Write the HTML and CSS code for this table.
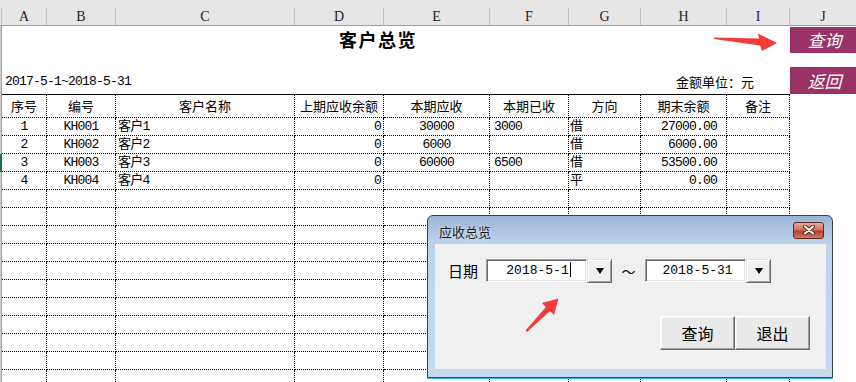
FILE: index.html
```html
<!DOCTYPE html>
<html lang="zh">
<head>
<meta charset="utf-8">
<title>客户总览</title>
<link rel="stylesheet" href="styles.css">
</head>
<body>
<div class="colhdr cols">
  <div class="ch corner"></div>
  <div class="ch">A</div><div class="ch">B</div><div class="ch">C</div><div class="ch">D</div><div class="ch">E</div>
  <div class="ch">F</div><div class="ch">G</div><div class="ch">H</div><div class="ch">I</div><div class="ch last">J</div>
</div>

<div class="top cols">
  <div class="rh span2"></div>
  <div class="title">客户总览</div>
  <div class="info"><span class="range">2017-5-1~2018-5-31</span><span class="unit">金额单位：元</span></div>
  <div class="side">
    <div class="macro b1">查询</div>
    <div class="macro b2">返回</div>
  </div>
</div>

<div class="row head cols">
  <div class="rh"></div>
  <div class="c th">序号</div><div class="c th">编号</div><div class="c th">客户名称</div><div class="c th">上期应收余额</div>
  <div class="c th">本期应收</div><div class="c th">本期已收</div><div class="c th">方向</div><div class="c th">期末余额</div><div class="c th">备注</div>
  <div class="j"></div>
</div>

<div class="row cols"><div class="rh"></div><div class="c ce">1</div><div class="c ce">KH001</div><div class="c le">客户1</div><div class="c ri">0</div><div class="c ce">30000</div><div class="c le f">3000</div><div class="c le g">借</div><div class="c rr">27000.00</div><div class="c"></div><div class="j"></div></div>
<div class="row cols"><div class="rh"></div><div class="c ce">2</div><div class="c ce">KH002</div><div class="c le">客户2</div><div class="c ri">0</div><div class="c ce">6000</div><div class="c le f"></div><div class="c le g">借</div><div class="c rr">6000.00</div><div class="c"></div><div class="j"></div></div>
<div class="row cols"><div class="rh sel"></div><div class="c ce">3</div><div class="c ce">KH003</div><div class="c le">客户3</div><div class="c ri">0</div><div class="c ce">60000</div><div class="c le f">6500</div><div class="c le g">借</div><div class="c rr">53500.00</div><div class="c"></div><div class="j"></div></div>
<div class="row cols"><div class="rh"></div><div class="c ce">4</div><div class="c ce">KH004</div><div class="c le">客户4</div><div class="c ri">0</div><div class="c ce"></div><div class="c le f"></div><div class="c le g">平</div><div class="c rr">0.00</div><div class="c"></div><div class="j"></div></div>
<div class="row cols"><div class="rh"></div><div class="c"></div><div class="c"></div><div class="c"></div><div class="c"></div><div class="c"></div><div class="c"></div><div class="c"></div><div class="c"></div><div class="c"></div><div class="j"></div></div>
<div class="row cols"><div class="rh"></div><div class="c"></div><div class="c"></div><div class="c"></div><div class="c"></div><div class="c"></div><div class="c"></div><div class="c"></div><div class="c"></div><div class="c"></div><div class="j"></div></div>
<div class="row cols"><div class="rh"></div><div class="c"></div><div class="c"></div><div class="c"></div><div class="c"></div><div class="c"></div><div class="c"></div><div class="c"></div><div class="c"></div><div class="c"></div><div class="j"></div></div>
<div class="row cols"><div class="rh"></div><div class="c"></div><div class="c"></div><div class="c"></div><div class="c"></div><div class="c"></div><div class="c"></div><div class="c"></div><div class="c"></div><div class="c"></div><div class="j"></div></div>
<div class="row cols"><div class="rh"></div><div class="c"></div><div class="c"></div><div class="c"></div><div class="c"></div><div class="c"></div><div class="c"></div><div class="c"></div><div class="c"></div><div class="c"></div><div class="j"></div></div>
<div class="row cols"><div class="rh"></div><div class="c"></div><div class="c"></div><div class="c"></div><div class="c"></div><div class="c"></div><div class="c"></div><div class="c"></div><div class="c"></div><div class="c"></div><div class="j"></div></div>
<div class="row cols"><div class="rh"></div><div class="c"></div><div class="c"></div><div class="c"></div><div class="c"></div><div class="c"></div><div class="c"></div><div class="c"></div><div class="c"></div><div class="c"></div><div class="j"></div></div>
<div class="row cols"><div class="rh"></div><div class="c"></div><div class="c"></div><div class="c"></div><div class="c"></div><div class="c"></div><div class="c"></div><div class="c"></div><div class="c"></div><div class="c"></div><div class="j"></div></div>
<div class="row cols"><div class="rh"></div><div class="c"></div><div class="c"></div><div class="c"></div><div class="c"></div><div class="c"></div><div class="c"></div><div class="c"></div><div class="c"></div><div class="c"></div><div class="j"></div></div>
<div class="row cols"><div class="rh"></div><div class="c"></div><div class="c"></div><div class="c"></div><div class="c"></div><div class="c"></div><div class="c"></div><div class="c"></div><div class="c"></div><div class="c"></div><div class="j"></div></div>
<div class="row cols"><div class="rh"></div><div class="c"></div><div class="c"></div><div class="c"></div><div class="c"></div><div class="c"></div><div class="c"></div><div class="c"></div><div class="c"></div><div class="c"></div><div class="j"></div></div>

<div class="dialog">
  <div class="dtitle">
    <span class="dname">应收总览</span>
    <div class="xbtn"><svg width="14" height="10" viewBox="0 0 14 10"><path d="M3 1.5 L11 8.5 M11 1.5 L3 8.5" stroke="#5a2a22" stroke-width="4" stroke-linecap="round"/><path d="M3 1.5 L11 8.5 M11 1.5 L3 8.5" stroke="#fff" stroke-width="2" stroke-linecap="round"/></svg></div>
  </div>
  <div class="client">
    <div class="daterow">
      <span class="lbl">日期</span>
      <div class="combo"><div class="inp">2018-5-1<span class="caret"></span></div><div class="dd"><svg width="8" height="6" viewBox="0 0 8 6"><polygon points="0,0 8,0 4,6" fill="#000"/></svg></div></div>
      <span class="tilde">～</span>
      <div class="combo"><div class="inp">2018-5-31</div><div class="dd"><svg width="8" height="6" viewBox="0 0 8 6"><polygon points="0,0 8,0 4,6" fill="#000"/></svg></div></div>
    </div>
    <div class="btnrow">
      <div class="dbtn">查询</div>
      <div class="dbtn">退出</div>
    </div>
  </div>
</div>

<svg class="marks" width="856" height="382" viewBox="0 0 856 382">
  <polygon points="714,37.5 759,38.5 758,33.5 777,43 762,51 760,45.5 714,39" fill="#f23b3b"/>
  <polygon points="525.5,330.5 546,307 542,303 558.5,298.5 554,315 550,311 527,332" fill="#f23b3b"/>
</svg>
</body>
</html>
```

FILE: styles.css
```css
* { box-sizing: border-box; margin: 0; padding: 0; }
html, body { width: 856px; height: 382px; overflow: hidden; background: #fff; }
body {
  position: relative;
  font-family: "Liberation Mono", "Noto Sans CJK SC", monospace;
  font-size: 13px;
  letter-spacing: -0.8px;
  color: #000;
}

.cols {
  display: grid;
  grid-template-columns: 2px 45px 69px 179px 89px 106px 79px 72px 86px 63px 66px;
}

/* column letters */
.colhdr {
  height: 26px;
  padding-top: 8px;
  background: #e6e6e6;
  border-bottom: 1px solid #9e9e9e;
}
.ch {
  border-right: 1px solid #c3c3c3;
  font-family: "Liberation Serif", serif;
  font-size: 14px;
  letter-spacing: 0;
  line-height: 17px;
  text-align: center;
  color: #222;
}
.ch.last { border-right: none; }

/* row header strip */
.rh {
  background: #cfcfcf;
  border-right: 1px solid #a0a0a0;
}
.rh.sel { background: #217346; border-right: none; }
.rh.span2 { grid-row: 1 / 3; grid-column: 1; }

/* top area */
.top { grid-template-rows: 34px 34px; }
.title {
  grid-column: 2 / 11;
  grid-row: 1;
  text-align: center;
  padding: 4px 36px 0 0;
  font-family: "Noto Sans CJK SC", sans-serif;
  font-weight: 700;
  font-size: 18px;
  letter-spacing: 1.5px;
  line-height: 18px;
}
.info {
  grid-column: 2 / 11;
  grid-row: 2;
  display: flex;
  justify-content: space-between;
  align-items: flex-end;
  padding: 0 36px 4px 3px;
  line-height: 16px;
}
.unit {
  font-family: "Noto Sans CJK SC", sans-serif;
  font-size: 13px;
  letter-spacing: 0;
}
.side {
  grid-column: 11;
  grid-row: 1 / 3;
  display: flex;
  flex-direction: column;
  gap: 14px;
  padding-top: 1px;
}
.macro {
  background: #993366;
  color: #fff;
  font-family: "Noto Sans CJK SC", sans-serif;
  font-style: italic;
  font-size: 17px;
  letter-spacing: 0;
  text-align: center;
  padding-left: 3px;
}
.b1 { height: 26px; line-height: 26px; }
.b2 { height: 27px; line-height: 27px; }

/* table */
.row { height: 18px; }
.row.head { height: 24px; }
.c {
  border-right: 1px dotted #000;
  border-bottom: 1px dotted #000;
  line-height: 17px;
  white-space: nowrap;
  overflow: hidden;
}
.th {
  border-top: 1px solid #000;
  text-align: center;
  line-height: 22px;
  font-family: "Noto Sans CJK SC", sans-serif;
  font-size: 13px;
  letter-spacing: 0;
}
.ce { text-align: center; }
.le { text-align: left; padding-left: 2px; }
.le.f { padding-left: 4px; }
.le.g { padding-left: 1px; }
.ri { text-align: right; padding-right: 2px; }
.rr { text-align: right; padding-right: 9px; }

/* dialog */
.dialog {
  position: absolute;
  left: 427px;
  top: 215px;
  width: 406px;
  height: 163px;
  z-index: 2;
  display: flex;
  flex-direction: column;
  padding: 0 6px 8px 7px;
  border: 1px solid #34404c;
  border-radius: 6px 6px 0 0;
  background: linear-gradient(to bottom, #98b3d4 0, #aec6e2 14px, #bdd3eb 28px, #c4d9ef 100%);
  box-shadow: 0 1px 0 #45bfe0;
}
.dtitle {
  height: 28px;
  display: flex;
  justify-content: space-between;
  align-items: center;
  padding: 2px 2px 0 4px;
}
.dname {
  font-family: "Noto Sans CJK SC", sans-serif;
  font-size: 13px;
  letter-spacing: 0;
  color: #1a1a1a;
  text-shadow: 0 0 3px rgba(255,255,255,0.7);
}
.xbtn {
  width: 31px;
  height: 17px;
  margin-bottom: 2px;
  border: 1px solid #5b2a25;
  border-radius: 3px;
  background: linear-gradient(to bottom, #eaa89b 0, #d46e5f 45%, #bb3f2f 55%, #d0786b 100%);
  display: flex;
  align-items: center;
  justify-content: center;
}
.client {
  flex: 1;
  background: #f0f0f0;
  padding: 15px 16px 0 13px;
}
.daterow {
  display: flex;
  align-items: center;
  height: 23px;
}
.lbl {
  font-family: "Noto Sans CJK SC", sans-serif;
  font-size: 15px;
  letter-spacing: 0;
  width: 38px;
}
.combo { display: flex; }
.inp {
  width: 101px;
  height: 23px;
  background: #fff;
  border: 1px solid;
  border-color: #a0a0a0 #fff #fff #a0a0a0;
  box-shadow: inset 1px 1px 0 #696969, inset -1px -1px 0 #e3e3e3;
  font-size: 13px;
  letter-spacing: 0;
  line-height: 21px;
  text-align: center;
  padding-left: 4px;
}
.caret {
  display: inline-block;
  width: 1px;
  height: 15px;
  background: #000;
  vertical-align: -3px;
  margin-left: 1px;
}
.dd {
  width: 25px;
  height: 24px;
  background: #f0f0f0;
  border: 1px solid;
  border-color: #e3e3e3 #696969 #696969 #e3e3e3;
  box-shadow: inset 1px 1px 0 #fff, inset -1px -1px 0 #a0a0a0;
  display: flex;
  align-items: center;
  justify-content: center;
}
.tilde {
  font-family: "Noto Sans CJK SC", sans-serif;
  font-size: 14px;
  letter-spacing: 0;
  width: 33px;
  text-align: center;
}
.btnrow {
  display: flex;
  justify-content: flex-end;
  margin-top: 34px;
}
.dbtn {
  width: 75px;
  height: 34px;
  background: #e9e9e9;
  border: 1px solid;
  border-color: #fff #696969 #696969 #fff;
  box-shadow: inset -1px -1px 0 #a0a0a0, inset 1px 1px 0 #f6f6f6;
  font-family: "Noto Sans CJK SC", sans-serif;
  font-size: 16px;
  letter-spacing: 0;
  line-height: 32px;
  text-align: center;
}

.marks {
  position: absolute;
  left: 0;
  top: 0;
  z-index: 3;
  pointer-events: none;
}
```
